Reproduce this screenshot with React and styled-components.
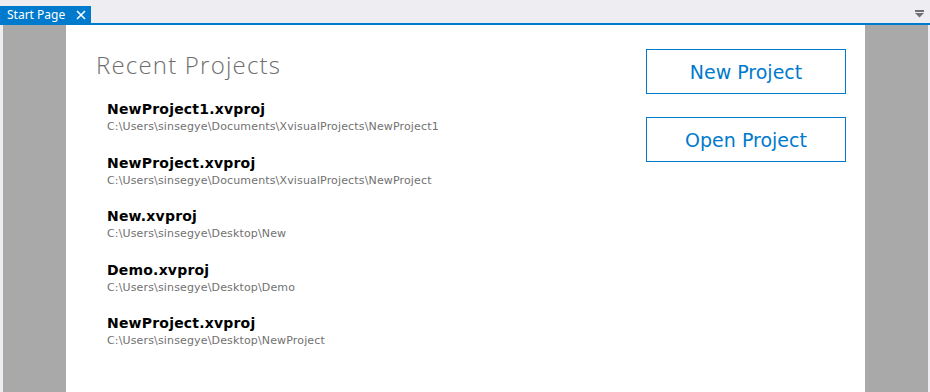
import React from "react";
import styled, { createGlobalStyle } from "styled-components";

const Global = createGlobalStyle`
  *, *::before, *::after { box-sizing: border-box; }
  html, body { margin: 0; padding: 0; background: #eeeef2; }
  body { width: 930px; height: 392px; overflow: hidden; }
  #root { height: 392px; }
`;

const Frame = styled.div`
  display: flex;
  flex-direction: column;
  width: 930px;
  height: 392px;
  background: #eeeef2;
`;

const TabStrip = styled.div`
  display: flex;
  align-items: flex-end;
  height: 25px;
  border-bottom: 2px solid #007acc;
  position: relative;
`;

const Tab = styled.div`
  display: flex;
  align-items: center;
  gap: 11px;
  height: 17px;
  width: 91px;
  padding: 0 0 0 7px;
  background: #007acc;
  color: #fff;
  font-family: "Noto Sans", "DejaVu Sans", sans-serif;
  font-size: 12px;
`;

const Close = styled.svg`
  width: 10px;
  height: 10px;
`;

const Dropdown = styled.svg`
  position: absolute;
  right: 6px;
  top: 10px;
  width: 9px;
  height: 8px;
`;

const Body = styled.div`
  flex: 1;
  display: flex;
  justify-content: center;
  background: #a9a9a9;
  margin: 0 2px 0 3px;
  min-height: 0;
`;

const Page = styled.div`
  width: 799px;
  background: #fff;
  display: flex;
  justify-content: space-between;
  padding: 0 19px 0 30px;
`;

const Left = styled.div`
  display: flex;
  flex-direction: column;
`;

const Title = styled.h1`
  margin: 25px 0 21px;
  font-family: "Open Sans", "Noto Sans", sans-serif;
  font-weight: 300;
  font-size: 24px;
  letter-spacing: 1.2px;
  color: #6d6d6d;
  line-height: 30px;
`;

const List = styled.div`
  display: flex;
  flex-direction: column;
  gap: 19.5px;
  padding-left: 11px;
`;

const Item = styled.div`
  display: flex;
  flex-direction: column;
`;

const Name = styled.div`
  font-family: "DejaVu Sans", Verdana, sans-serif;
  font-weight: bold;
  font-size: 14px;
  letter-spacing: 0.2px;
  line-height: 17px;
  color: #000;
`;

const Path = styled.div`
  font-family: "DejaVu Sans", Tahoma, sans-serif;
  font-size: 11px;
  letter-spacing: 0.15px;
  line-height: 17px;
  color: #717171;
`;

const Right = styled.div`
  display: flex;
  flex-direction: column;
  gap: 23px;
  padding-top: 24px;
`;

const Button = styled.button`
  width: 200px;
  height: 45px;
  background: #fff;
  border: 1px solid #007acc;
  color: #007acc;
  font-family: "DejaVu Sans", Verdana, sans-serif;
  font-size: 19px;
  padding: 0;
  cursor: pointer;
`;

const projects = [
  ["NewProject1.xvproj", "C:\\Users\\sinsegye\\Documents\\XvisualProjects\\NewProject1"],
  ["NewProject.xvproj", "C:\\Users\\sinsegye\\Documents\\XvisualProjects\\NewProject"],
  ["New.xvproj", "C:\\Users\\sinsegye\\Desktop\\New"],
  ["Demo.xvproj", "C:\\Users\\sinsegye\\Desktop\\Demo"],
  ["NewProject.xvproj", "C:\\Users\\sinsegye\\Desktop\\NewProject"],
];

export default function App() {
  return (
    <>
      <Global />
      <Frame>
        <TabStrip>
          <Tab>
            Start Page
            <Close viewBox="0 0 10 10">
              <path d="M1 1 L9 9 M9 1 L1 9" stroke="#fff" strokeWidth="1.6" />
            </Close>
          </Tab>
          <Dropdown viewBox="0 0 9 8">
            <rect x="0" y="0" width="9" height="2" fill="#717171" />
            <path d="M0 3 L9 3 L4.5 7.5 Z" fill="#717171" />
          </Dropdown>
        </TabStrip>
        <Body>
          <Page>
            <Left>
              <Title>Recent Projects</Title>
              <List>
                {projects.map(([n, p], i) => (
                  <Item key={i}>
                    <Name>{n}</Name>
                    <Path>{p}</Path>
                  </Item>
                ))}
              </List>
            </Left>
            <Right>
              <Button>New Project</Button>
              <Button>Open Project</Button>
            </Right>
          </Page>
        </Body>
      </Frame>
    </>
  );
}
